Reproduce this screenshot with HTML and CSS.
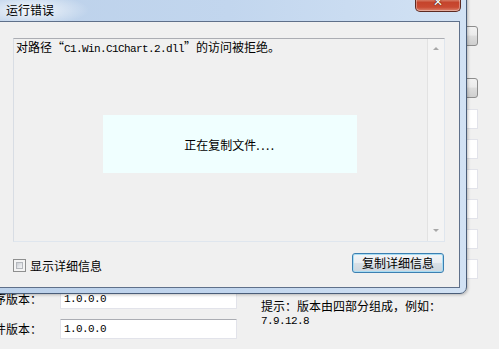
FILE: index.html
```html
<!DOCTYPE html>
<html lang="zh-CN">
<head>
<meta charset="utf-8">
<title>运行错误</title>
<link rel="stylesheet" href="styles.css">
</head>
<body>
<div class="desk">
  <div class="side">
    <div class="sbtn"></div>
    <div class="sbtn second"></div>
    <div class="sbox first"></div>
    <div class="sbox"></div>
    <div class="sbox"></div>
    <div class="sbox"></div>
    <div class="sbox"></div>
    <div class="sbox"></div>
  </div>
  <div class="form">
    <div class="lbl"><span>程序版本：</span></div>
    <div class="tb"><span class="mono">1.0.0.0</span></div>
    <div class="hint">提示：版本由四部分组成，例如：<br><span class="mono">7.9.12.8</span></div>
    <div class="lbl"><span>文件版本：</span></div>
    <div class="tb"><span class="mono">1.0.0.0</span></div>
  </div>

  <div class="win">
    <div class="titlebar">
      <div class="title">运行错误</div>
      <div class="close"><span class="x">✕</span></div>
    </div>
    <div class="client">
      <div class="msgbox">
        <div class="msgtext">对路径“<span class="mono">C1.Win.C1Chart.2.dll</span>”的访问被拒绝。</div>
        <div class="vscroll">
          <span class="arrow up"></span>
          <span class="arrow down"></span>
        </div>
        <div class="progress">正在复制文件<span class="dots">....</span></div>
      </div>
      <div class="actions">
        <label class="check"><span class="cb"><span class="cbi"></span></span>显示详细信息</label>
        <button class="btn">复制详细信息</button>
      </div>
    </div>
  </div>
</div>
</body>
</html>
```
FILE: styles.css
```css
html, body {
  margin: 0;
  padding: 0;
}
body {
  width: 499px;
  height: 349px;
  overflow: hidden;
  background: #f0f0f0;
  font-family: "Noto Sans CJK SC", "Noto Sans", sans-serif;
  font-size: 12px;
  color: #000;
}
.mono {
  font-family: "Liberation Mono", "DejaVu Sans Mono", monospace;
  font-size: 11px;
  letter-spacing: -0.6px;
}
.desk {
  position: relative;
  width: 499px;
  height: 349px;
  overflow: hidden;
}

/* background window */
.side {
  display: flex;
  flex-direction: column;
  padding-top: 26px;
  margin-left: 440px;
  width: 38px;
}
.sbtn {
  height: 18px;
  border: 1px solid #8d8d8d;
  border-radius: 3px;
  background: linear-gradient(#f2f2f2 0%, #ebebeb 45%, #dddddd 50%, #cfcfcf 100%);
}
.sbtn.second { margin-top: 32px; }
.sbox {
  height: 18px;
  border: 1px solid #e2e3ea;
  background: #fff;
  margin-top: 10px;
}
.sbox.first { margin-top: 11px; }

.form {
  display: grid;
  grid-template-columns: 42px 195px auto;
  grid-template-rows: 20px 20px;
  row-gap: 10px;
  margin-top: 10px;
}
.lbl {
  display: flex;
  align-items: center;
  justify-content: flex-end;
  white-space: nowrap;
  margin-top: -2px;
}
.lbl span {
  flex: none;
}
.tb {
  margin-left: 18px;
  background: #fff;
  border: 1px solid #e2e3ea;
  border-top-color: #abadb3;
  border-radius: 1px;
  display: flex;
  align-items: center;
  padding-left: 3px;
}
.hint {
  grid-column: 3;
  grid-row: 1 / span 2;
  line-height: 13px;
  margin-top: 10px;
  margin-left: 24px;
  white-space: nowrap;
}

/* dialog window */
.win {
  position: absolute;
  left: -9px;
  top: -9px;
  width: 476px;
  height: 303px;
  box-sizing: border-box;
  border: 1px solid #4a5d78;
  border-radius: 7px;
  padding: 0 6px 5px 7px;
  display: flex;
  flex-direction: column;
  background: linear-gradient(90deg, #bcd1ea 0%, #c2d6ee 50%, #d2e2f4 100%);
  box-shadow: 1px 1px 3px rgba(0,0,0,0.25);
}
.titlebar {
  height: 29px;
  display: flex;
  justify-content: space-between;
  align-items: flex-start;
  flex: none;
  background: radial-gradient(ellipse 60px 16px at 30px 18px, rgba(255,255,255,0.85), rgba(255,255,255,0) 100%);
}
.title {
  margin-top: 10px;
  margin-left: 7px;
  line-height: 16px;
  font-size: 12px;
  color: #000;
}
.close {
  width: 46px;
  height: 20px;
  box-sizing: border-box;
  border: 1px solid #5d2a22;
  border-top: none;
  border-radius: 0 0 5px 5px;
  margin-right: -1px;
  background: linear-gradient(#e7a894 0%, #d7826c 40%, #c5442c 55%, #c94a32 80%, #db8670 100%);
  box-shadow: inset 0 0 0 1px rgba(255,255,255,0.35);
  display: flex;
  justify-content: center;
  align-items: center;
}
.x {
  color: #fff;
  font-family: "DejaVu Sans", sans-serif;
  font-weight: bold;
  font-size: 12px;
  line-height: 12px;
  text-shadow: 0 0 1px #3a0d05, 0 0 1px #3a0d05;
}
.client {
  flex: 1;
  border: 1px solid #5f708a;
  background: #f0f0f0;
  padding: 16px 14px 13px 13px;
  display: flex;
  flex-direction: column;
}
.msgbox {
  position: relative;
  height: 204px;
  box-sizing: border-box;
  border: 1px solid #dfe6ee;
  border-top-color: #abadb3;
  border-left-color: #d8dde4;
  background: #f0f0f0;
  display: flex;
}
.msgtext {
  flex: 1;
  padding: 1px 2px;
  line-height: 14px;
  white-space: nowrap;
}
.vscroll {
  position: relative;
  width: 16px;
  border-left: 1px solid #e2e2e2;
  background: #f4f4f4;
}
.arrow {
  position: absolute;
  left: 5px;
  width: 0;
  height: 0;
  border-left: 3px solid transparent;
  border-right: 3px solid transparent;
}
.arrow.up {
  top: 8px;
  border-bottom: 3px solid #a8a8a8;
}
.arrow.down {
  bottom: 9px;
  border-top: 3px solid #a8a8a8;
}
.progress {
  position: absolute;
  left: 89px;
  top: 76px;
  width: 254px;
  height: 58px;
  background: #f0ffff;
  display: flex;
  align-items: center;
  justify-content: center;
  box-sizing: border-box;
  line-height: 14px;
  padding-top: 1px;
}
.dots {
  letter-spacing: 1.5px;
}
.actions {
  display: flex;
  justify-content: space-between;
  align-items: center;
  margin-top: 11px;
  height: 20px;
}
.check {
  display: flex;
  align-items: center;
  gap: 4px;
  margin-top: 4px;
}
.cb {
  width: 13px;
  height: 13px;
  box-sizing: border-box;
  border: 1px solid #8e8f8f;
  background: #f4f4f4;
  padding: 2px;
  display: flex;
}
.cbi {
  flex: 1;
  background: linear-gradient(135deg, #c9cdd3 0%, #e6e8eb 60%, #f4f4f5 100%);
  border: 1px solid #b5b8bd;
}
.btn {
  width: 92px;
  height: 20px;
  margin-right: 1px;
  font-family: "Noto Sans CJK SC", sans-serif;
  font-size: 12px;
  line-height: 14px;
  color: #000;
  border: 1px solid #3c7fb1;
  border-radius: 3px;
  padding: 0;
  background: linear-gradient(#f3f5f7 0%, #e9edf1 48%, #d9e0e6 52%, #cdd6de 100%);
  box-shadow: inset 0 0 0 1px #a7dcf3;
}
```
